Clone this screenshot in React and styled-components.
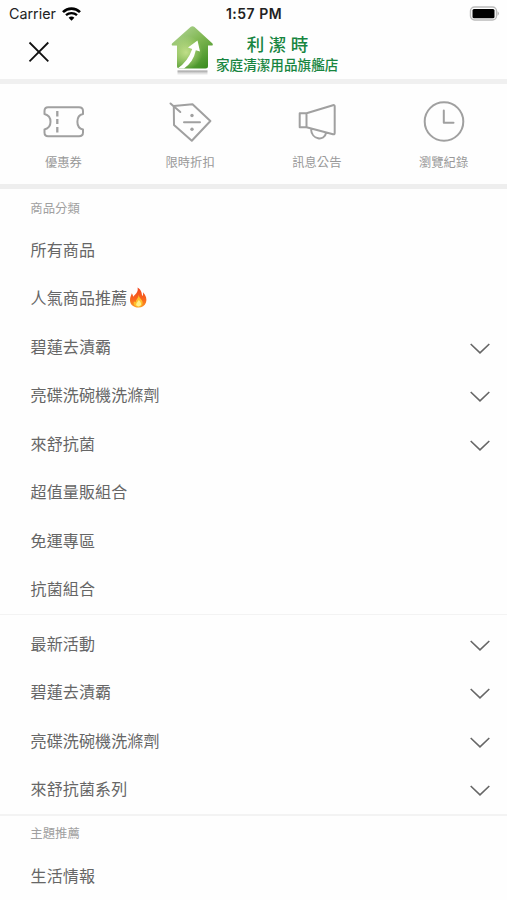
import React from 'react'
import styled, { createGlobalStyle } from 'styled-components'

const GlobalStyle = createGlobalStyle`
  * { box-sizing: border-box; }
  body {
    margin: 0;
    background: #fefefe;
    font-family: "Noto Sans CJK TC", sans-serif;
    overflow: hidden;
  }
  button { border: 0; padding: 0; background: none; font: inherit; color: inherit; }
  svg { display: block; }
`

const Screen = styled.div`
  width: 507px;
  height: 900px;
  overflow: hidden;
`

const StatusBar = styled.div`
  height: 28px;
  padding: 0 8px 0 9px;
  display: grid;
  grid-template-columns: 1fr auto 1fr;
  align-items: center;
  font-family: Inter, sans-serif;
  font-size: 14.3px;
  line-height: 28px;
  color: #222;
`

const Carrier = styled.div`
  display: flex;
  align-items: center;
  gap: 6px;
`

const Time = styled.div`
  font-size: 14px;
  font-weight: 600;
  letter-spacing: 0.5px;
`

const Battery = styled.div`
  justify-self: end;
`

const Header = styled.header`
  height: 56px;
  padding: 0 28px;
  border-bottom: 5px solid #f0f0f0;
  display: grid;
  grid-template-columns: 143px auto 1fr;
`

const CloseButton = styled.button`
  width: 22px;
  height: 22px;
  margin-top: 13px;
`

const Logo = styled.div`
  display: flex;
  margin-top: -3px;
`

const LogoText = styled.div`
  margin: 8px 0 0 2px;
  display: flex;
  flex-direction: column;
  align-items: center;
  color: #17853f;
`

const LogoName = styled.div`
  font-size: 17.5px;
  line-height: 22px;
  letter-spacing: 4.5px;
  margin-left: 5px;
  font-weight: 500;
`

const LogoSlogan = styled.div`
  font-size: 13.6px;
  line-height: 19px;
  font-weight: 500;
  white-space: nowrap;
`

const QuickLinks = styled.nav`
  height: 105px;
  border-bottom: 5px solid #eee;
  display: grid;
  grid-template-columns: repeat(4, 1fr);
`

const QuickLink = styled.a`
  display: flex;
  flex-direction: column;
  align-items: center;
  padding-top: 15px;
  color: #999;
  font-size: 12.3px;
  line-height: 20px;

  svg { margin-bottom: 9px; }
`

const Section = styled.section`
  padding-top: ${p => p.$top || 0}px;
  border-bottom: ${p => p.$line || 0}px solid #f3f3f3;
`

const SectionTitle = styled.h2`
  margin: 0;
  height: 36.5px;
  padding-left: 30.3px;
  font-size: 12.4px;
  font-weight: 400;
  line-height: ${p => p.$lead || 37}px;
  color: #a0a0a0;
`

const Row = styled.div`
  height: 48.5px;
  padding: 0 17px 0 30.5px;
  display: flex;
  align-items: center;
  justify-content: space-between;
  color: #666;

  > svg { margin-top: 3px; }
`

const RowLabel = styled.span`
  display: flex;
  align-items: center;
  gap: 2px;
  padding-bottom: 2px;
  font-size: 16px;
  letter-spacing: 0.14px;
  line-height: 24px;

  svg { margin-top: 1px; }
`

const Wifi = () => (
  <svg width="19" height="14" viewBox="0 0 19 14" fill="none" stroke="#000">
    <path d="M1 5.1C5.8.5 13.2.5 18 5.1" strokeWidth="2.7" />
    <path d="M4 8.2c3.1-2.9 7.9-2.9 11 0" strokeWidth="2.3" />
    <path d="M6.6 10.8c1.6-1.7 4.2-1.7 5.8 0L9.5 13.7z" fill="#000" stroke="none" />
  </svg>
)

const BatteryIcon = () => (
  <svg width="30" height="16" viewBox="0 0 30 16">
    <rect x="1.5" y="1" width="26" height="13" rx="4" fill="#fff" stroke="#bbb" strokeWidth="1.4" />
    <rect x="3.5" y="3" width="22" height="9.3" rx="1.5" fill="#000" />
    <path d="M28.6 5.3q2.4 2.2 0 4.5z" fill="#aaa" />
  </svg>
)

const housePath = 'M19.5 2q2-1.6 4 0L41.5 18.5q1 2-1 2H37V41q0 2.5-2.5 2.5h-26Q6 43.5 6 41V20.5H2q-2 0-1-2z'

const HouseLogo = () => (
  <svg width="43" height="52" viewBox="0 0 43 52">
    <defs>
      <linearGradient id="house" x1="0.1" y1="0" x2="0.8" y2="1">
        <stop offset="0" stopColor="#b4d59b" />
        <stop offset="0.45" stopColor="#83b956" />
        <stop offset="1" stopColor="#3c8d20" />
      </linearGradient>
      <radialGradient id="shine" cx="0.35" cy="0.62" r="0.4">
        <stop offset="0" stopColor="#c8e38f" stopOpacity="0.9" />
        <stop offset="1" stopColor="#c8e38f" stopOpacity="0" />
      </radialGradient>
      <linearGradient id="shadow" x1="0" y1="0" x2="0" y2="1">
        <stop offset="0" stopColor="#999" />
        <stop offset="1" stopColor="#ccc" stopOpacity="0" />
      </linearGradient>
    </defs>
    <rect x="6.5" y="45.500" width="30" height="5" fill="url(#shadow)" />
    <path d={housePath} fill="url(#house)" />
    <path d={housePath} fill="url(#shine)" />
    <path d="M17 22.500L26.500 15.500 29 26.500 24.800 25.300Q22.500 37 13 43.500H6.500Q17 36.500 21.200 24z" fill="#fff" />
  </svg>
)

const Icon = ({ children }) => (
  <svg width="44" height="44" viewBox="0 0 44 44" fill="none" stroke="#a0a0a0" strokeWidth="2" strokeLinecap="round" strokeLinejoin="round">
    {children}
  </svg>
)

const Coupon = () => (
  <Icon>
    <path d="M7 8.200H38Q42 8.200 42 12V15C34.500 16.500 34.500 29 42 30.500V33.500Q42 37.200 38 37.200H7Q3.500 37.200 3.500 33.500V30.500C11.500 28.500 11.500 17 3.500 15V12Q3.500 8.200 7 8.200z" />
    <path d="M16.300 12v5.500M16.300 20v5M16.300 28v5.500" strokeLinecap="butt" strokeWidth="2.300" />
  </Icon>
)

const Tag = () => (
  <Icon>
    <path d="M5.800 7L24.500 5.300 42.400 22 23.800 41.700 6 26z" />
    <path d="M2.500 4.500L12.300 13M16 23.300H32" />
    <circle cx="24" cy="16.500" r="1.700" fill="#a0a0a0" stroke="none" />
    <circle cx="24" cy="30.200" r="1.700" fill="#a0a0a0" stroke="none" />
  </Icon>
)

const Megaphone = () => (
  <Icon>
    <path d="M4.700 14.300H11.500L38 6.200Q39.700 5.800 39.700 7.500V34Q39.700 35.700 38 35.200L11.500 28.200H4.700zM11.500 14.300V28.200M16 30C16.500 41 29.500 42.500 31 34" />
  </Icon>
)

const Clock = () => (
  <Icon>
    <circle cx="22" cy="22.500" r="19.300" />
    <path d="M21.800 11.500V23.800H31.500" />
  </Icon>
)

const Chevron = () => (
  <svg width="20" height="11" viewBox="0 0 20 11" fill="none" stroke="#666" strokeWidth="1.600">
    <path d="M.7 1L10 9.900 19.300 1" />
  </svg>
)

const Fire = () => (
  <svg width="19" height="21" viewBox="0 0 19 21">
    <defs>
      <linearGradient id="flame" x1="0" y1="0" x2="0" y2="1">
        <stop offset="0" stopColor="#f0441f" />
        <stop offset="0.6" stopColor="#f9671d" />
        <stop offset="1" stopColor="#fb9a24" />
      </linearGradient>
    </defs>
    <path d="M8.500.5C13 3 12.500 6.500 13.300 9 14 8.500 14.200 7 14 5.200 17 8.500 18.200 12 17 15.500 15.800 18.800 13 20.500 9.500 20.500 4.500 20.500 1 17.500 1 13.200 1 9.800 2.300 8.200 2.800 6.300 3.600 7.500 4.100 8.700 4.200 9.800 6 7.300 9.800 5 8.500.5z" fill="url(#flame)" />
    <path d="M9.800 8C10 11 12.300 12 13 13.500 14.800 17 12.500 20 9.500 20 6 20 3.800 17.500 5 14.300 5.600 15 6 15.300 6.600 15.300 6.700 12.500 9.500 11 9.800 8z" fill="#ffc02d" />
    <path d="M9.800 13Q13 16.200 11.800 18.300 9.500 20.500 7.200 18.300 6.800 16.500 9.800 13z" fill="#fff08a" />
  </svg>
)

const quickLinks = [
  { label: '優惠券', icon: <Coupon /> },
  { label: '限時折扣', icon: <Tag /> },
  { label: '訊息公告', icon: <Megaphone /> },
  { label: '瀏覽紀錄', icon: <Clock /> },
]

const categories = [
  { label: '所有商品' },
  { label: '人氣商品推薦', hot: true },
  { label: '碧蓮去漬霸', more: true },
  { label: '亮碟洗碗機洗滌劑', more: true },
  { label: '來舒抗菌', more: true },
  { label: '超值量販組合' },
  { label: '免運專區' },
  { label: '抗菌組合' },
]

const events = [
  { label: '最新活動', more: true },
  { label: '碧蓮去漬霸', more: true },
  { label: '亮碟洗碗機洗滌劑', more: true },
  { label: '來舒抗菌系列', more: true },
]

const topics = [{ label: '生活情報' }]

const Rows = ({ items }) => items.map(item => (
  <Row key={item.label}>
    <RowLabel>{item.label}{item.hot && <Fire />}</RowLabel>
    {item.more && <Chevron />}
  </Row>
))

const App = () => (
  <Screen>
    <GlobalStyle />
    <StatusBar>
      <Carrier>Carrier <Wifi /></Carrier>
      <Time>1:57 PM</Time>
      <Battery><BatteryIcon /></Battery>
    </StatusBar>
    <Header>
      <CloseButton aria-label="close">
        <svg width="22" height="22" viewBox="0 0 22 22" stroke="#111" strokeWidth="1.800">
          <path d="M1.500 1.500L20.300 20.300M20.300 1.500L1.500 20.300" />
        </svg>
      </CloseButton>
      <Logo>
        <HouseLogo />
        <LogoText>
          <LogoName>利潔時</LogoName>
          <LogoSlogan>家庭清潔用品旗艦店</LogoSlogan>
        </LogoText>
      </Logo>
    </Header>
    <QuickLinks>
      {quickLinks.map(link => (
        <QuickLink key={link.label}>{link.icon}{link.label}</QuickLink>
      ))}
    </QuickLinks>
    <Section $line={1}>
      <SectionTitle $lead={38}>商品分類</SectionTitle>
      <Rows items={categories} />
    </Section>
    <Section $top={5} $line={2}>
      <Rows items={events} />
    </Section>
    <Section>
      <SectionTitle $lead={35}>主題推薦</SectionTitle>
      <Rows items={topics} />
    </Section>
  </Screen>
)

export default App
